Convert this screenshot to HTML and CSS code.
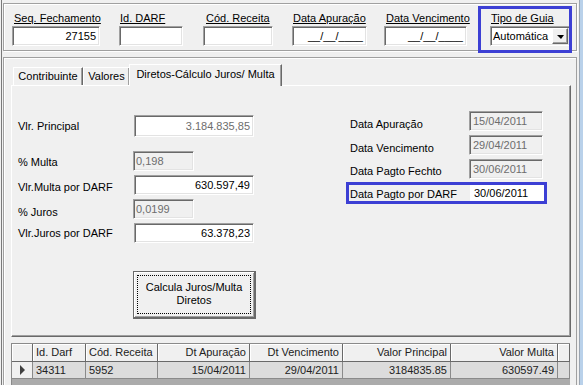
FILE: index.html
```html
<!DOCTYPE html>
<html lang="pt">
<head>
    <meta charset="UTF-8">
    <title>Diretos - Cálculo Juros/Multa</title>
    <link rel="stylesheet" href="styles.css">
</head>
<body>
<div class="window">
    <div class="frame">
        <div class="header-panel">
            <div class="field f-seq">
                <label>Seq. Fechamento</label>
                <div class="edit num">27155</div>
            </div>
            <div class="field f-id">
                <label>Id. DARF</label>
                <div class="edit"></div>
            </div>
            <div class="field f-cod">
                <label>Cód. Receita</label>
                <div class="edit"></div>
            </div>
            <div class="field f-apur">
                <label>Data Apuração</label>
                <div class="edit num">__/__/____</div>
            </div>
            <div class="field f-venc">
                <label>Data Vencimento</label>
                <div class="edit num">__/__/____</div>
            </div>
            <div class="field f-tipo">
                <label>Tipo de Guia</label>
                <div class="combo">
                    <span class="combo-text">Automática</span>
                    <span class="combo-btn"></span>
                </div>
            </div>
        </div>
        <!-- marcação azul em volta do tipo de guia -->
        <div class="highlight hl-tipo"></div>

        <div class="group">
            <div class="tabs">
                <div class="tab t-contrib">Contribuinte</div>
                <div class="tab t-valores">Valores</div>
                <div class="tab t-diretos active">Diretos-Cálculo Juros/ Multa</div>
            </div>
            <div class="tab-page">
                <div class="col-left">
                    <div class="row r1">
                        <span class="lbl">Vlr. Principal</span>
                        <div class="edit num ro w-val h22">3.184.835,85</div>
                    </div>
                    <div class="row r2">
                        <span class="lbl narrow">% Multa</span>
                        <div class="edit off w-pct">0,198</div>
                    </div>
                    <div class="row r3">
                        <span class="lbl">Vlr.Multa por DARF</span>
                        <div class="edit num w-val">630.597,49</div>
                    </div>
                    <div class="row r4">
                        <span class="lbl narrow">% Juros</span>
                        <div class="edit off w-pct">0,0199</div>
                    </div>
                    <div class="row r5">
                        <span class="lbl">Vlr.Juros por DARF</span>
                        <div class="edit num w-val">63.378,23</div>
                    </div>
                    <button class="btn-calc"><span class="focus">Calcula Juros/Multa<br>Diretos</span></button>
                </div>
                <div class="col-right">
                    <div class="row d1">
                        <span class="lbl">Data Apuração</span>
                        <div class="edit off w-date">15/04/2011</div>
                    </div>
                    <div class="row d2">
                        <span class="lbl">Data Vencimento</span>
                        <div class="edit off w-date">29/04/2011</div>
                    </div>
                    <div class="row d3">
                        <span class="lbl">Data Pagto Fechto</span>
                        <div class="edit off w-date">30/06/2011</div>
                    </div>
                    <div class="row d4 marked">
                        <span class="lbl">Data Pagto por DARF</span>
                        <div class="edit w-date h16">30/06/2011</div>
                    </div>
                </div>
            </div>

            <div class="grid">
                <div class="grid-row grid-head">
                    <div class="cell"></div>
                    <div class="cell">Id. Darf</div>
                    <div class="cell">Cód. Receita</div>
                    <div class="cell right">Dt Apuração</div>
                    <div class="cell right">Dt Vencimento</div>
                    <div class="cell right">Valor Principal</div>
                    <div class="cell right">Valor Multa</div>
                    <div class="cell"></div>
                </div>
                <div class="grid-row grid-data">
                    <div class="cell indicator"><span class="arrow"></span></div>
                    <div class="cell">34311</div>
                    <div class="cell">5952</div>
                    <div class="cell right">15/04/2011</div>
                    <div class="cell right">29/04/2011</div>
                    <div class="cell right">3184835.85</div>
                    <div class="cell right">630597.49</div>
                    <div class="cell"></div>
                </div>
            </div>
        </div>
    </div>
    <div class="side"></div>
</div>
</body>
</html>
```

FILE: styles.css
```css
* {
    box-sizing: border-box;
}

body {
    margin: 0;
    background: #f0f0f0;
    font-family: "Liberation Sans", Arial, sans-serif;
    font-size: 11px;
    color: #000;
    overflow: hidden;
}

.window {
    display: flex;
    height: 385px;
    overflow: hidden;
}

.frame {
    flex: 1;
    position: relative;
    margin-left: 1px;
    border-left: 1px solid #7a7a7a;
    padding: 3px 2px 0 1px;
}

.side {
    width: 4px;
    border-left: 1px solid #9aa4b0;
    background: #b9d1ea;
}

/* painel de cima */
.header-panel {
    display: flex;
    height: 48px;
    border: 1px solid #a0a0a0;
    box-shadow: inset 1px 1px 0 #fff, 1px 1px 0 #fff;
    padding: 8px 0 0 8px;
}

.field {
    display: flex;
    flex-direction: column;
}

.field label {
    line-height: 13px;
    padding-left: 2px;
    margin-bottom: 1px;
    text-decoration: underline;
    white-space: nowrap;
}

.f-seq  { width: 88px; }
.f-id   { width: 64px; margin-left: 19px; }
.f-cod  { width: 70px; margin-left: 20px; }
.f-apur { width: 75px; margin-left: 19px; }
.f-venc { width: 83px; margin-left: 17px; }
.f-tipo { width: 80px; margin-left: 23px; }

.f-id label, .f-apur label, .f-tipo label { padding-left: 1px; }
.f-cod label { padding-left: 3px; }

.edit {
    height: 20px;
    border: 1px solid;
    border-color: #a0a0a0 #fff #fff #a0a0a0;
    box-shadow: inset 1px 1px 0 #696969, inset -1px -1px 0 #e3e3e3;
    background: #fff;
    line-height: 18px;
    padding: 0 3px;
    white-space: nowrap;
    overflow: hidden;
}

.edit.num { text-align: right; }
.edit.ro { color: #6d6d6d; }
.edit.off { background: #f0f0f0; color: #6d6d6d; }

.combo {
    display: flex;
    height: 20px;
    border: 1px solid;
    border-color: #a0a0a0 #fff #fff #a0a0a0;
    box-shadow: inset 1px 1px 0 #696969, inset -1px -1px 0 #e3e3e3;
    background: #fff;
    padding: 1px;
}

.combo-text {
    flex: 1;
    line-height: 16px;
    padding-left: 1px;
}

.combo-btn {
    width: 16px;
    height: 16px;
    display: flex;
    align-items: center;
    justify-content: center;
    background: #f0f0f0;
    border: 1px solid;
    border-color: #fff #696969 #696969 #fff;
    box-shadow: inset -1px -1px 0 #a0a0a0;
}

.combo-btn::after {
    content: "";
    border-left: 4px solid transparent;
    border-right: 3px solid transparent;
    border-top: 4px solid #000;
    margin-top: 1px;
}

.highlight {
    position: absolute;
    border: 3px solid #3c3fd4;
}

.hl-tipo {
    left: 476px;
    top: 6px;
    width: 94px;
    height: 47px;
}

/* grupo com as abas */
.group {
    margin-top: 6px;
    height: 340px;
    border: 1px solid #a0a0a0;
    box-shadow: inset 1px 1px 0 #fff;
    padding-left: 7px;
}

.tabs {
    display: flex;
    align-items: flex-end;
    height: 27px;
    padding-left: 2px;
}

.tab {
    height: 18px;
    border: 1px solid;
    border-color: #fff #696969 transparent #fff;
    border-bottom: none;
    box-shadow: inset -1px 0 0 #a0a0a0;
    text-align: center;
    line-height: 17px;
    white-space: nowrap;
}

.t-contrib { width: 70px; }
.t-valores { width: 47px; }
.t-diretos { width: 153px; margin-left: -1px; }

.tab.active {
    position: relative;
    z-index: 1;
    height: 22px;
    margin-bottom: -1px;
    background: #f0f0f0;
    line-height: 18px;
}

.tab-page {
    display: flex;
    width: 560px;
    height: 252px;
    border: 1px solid;
    border-color: #fff #696969 #696969 #fff;
    box-shadow: inset -1px -1px 0 #a0a0a0;
    padding-left: 6px;
}

.row {
    display: flex;
    align-items: flex-end;
}

.lbl {
    line-height: 13px;
    white-space: nowrap;
}

.col-left {
    width: 236px;
    padding-top: 29px;
}

.col-left .lbl { width: 116px; }
.col-left .lbl.narrow { width: 115px; }

.w-val { width: 120px; }
.w-pct { width: 61px; padding-left: 2px; }
.h22 { height: 22px; line-height: 20px; }

.r1 .lbl { padding-bottom: 4px; }
.r2 { margin-top: 14px; }
.r2 .lbl { padding-bottom: 2px; }
.r3 { margin-top: 4px; }
.r3 .lbl { padding-bottom: 1px; }
.r4 { margin-top: 4px; }
.r4 .lbl { padding-bottom: 0; }
.r5 { margin-top: 4px; }
.r5 .lbl { padding-bottom: 3px; }

.btn-calc {
    display: block;
    width: 123px;
    height: 48px;
    margin: 28px 0 0 115px;
    padding: 3px;
    background: #f0f0f0;
    border: 1px solid #696969;
    border-right-width: 2px;
    border-bottom-width: 2px;
    box-shadow: inset 1px 1px 0 #fff, inset -1px -1px 0 #a0a0a0;
    font-family: inherit;
    font-size: 11px;
    line-height: 13px;
    color: #000;
}

.btn-calc .focus {
    display: flex;
    align-items: center;
    justify-content: center;
    height: 100%;
    border: 1px dotted #000;
    padding-bottom: 1px;
}

.col-right {
    width: 201px;
    margin-left: 92px;
    padding-top: 25px;
}

.col-right .row { padding-left: 4px; }
.col-right .lbl { width: 119px; }
.w-date { width: 74px; }
.h16 { height: 16px; line-height: 15px; }

.d2, .d3 { margin-top: 4px; }
.d3 .lbl { padding-bottom: 1px; }

.row.marked {
    margin-top: 3px;
    height: 22px;
    padding-left: 0;
    border: 3px solid #3c3fd4;
}

.marked .lbl {
    width: 121px;
    padding-left: 1px;
}

.marked .edit {
    border-color: #fff;
    box-shadow: none;
    padding-left: 3px;
}

/* grade */
.grid {
    width: 559px;
    height: 60px;
    margin-top: 6px;
    border-top: 1px solid #8a8a8a;
    border-left: 1px solid #8a8a8a;
    background: #ababab;
}

.grid-row {
    display: grid;
    grid-template-columns: 21px 53px 72px 92px 93px 108px 107px 12px;
}

.cell {
    padding: 0 3px;
    white-space: nowrap;
    overflow: hidden;
    color: #222;
}

.cell.right { text-align: right; }

.grid-head .cell {
    height: 18px;
    line-height: 17px;
    background: #f0f0f0;
    border-right: 1px solid #696969;
    border-bottom: 1px solid #696969;
    box-shadow: inset 1px 1px 0 #fff;
}

.grid-data .cell {
    height: 17px;
    line-height: 16px;
    background: #dcdcdc;
    border-right: 1px solid #8a8a8a;
    border-bottom: 1px solid #8a8a8a;
}

.grid-data .cell.indicator {
    display: flex;
    align-items: center;
    justify-content: center;
    background: #f0f0f0;
}

.arrow {
    border-left: 5px solid #404040;
    border-top: 5px solid transparent;
    border-bottom: 5px solid transparent;
    margin-left: 1px;
}
```
